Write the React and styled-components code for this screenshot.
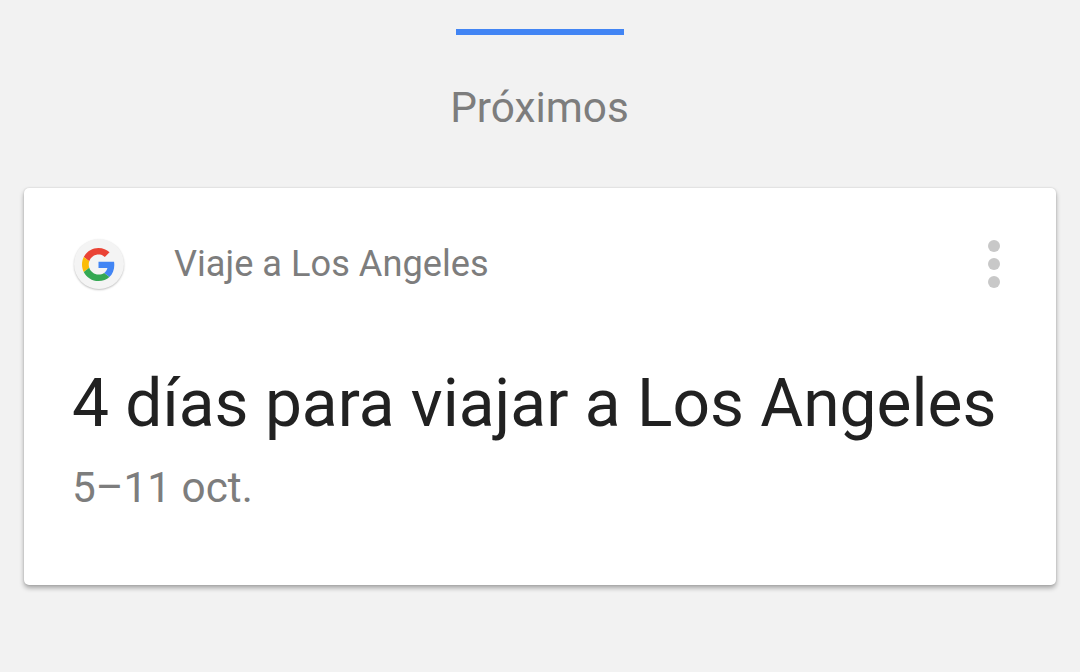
import React from 'react';
import styled, { createGlobalStyle } from 'styled-components';

const GlobalStyle = createGlobalStyle`
  html, body {
    margin: 0;
    padding: 0;
    background: #f2f2f2;
    font-family: Roboto, "Liberation Sans", sans-serif;
  }
`

const Page = styled.div`
  width: 1080px;
  height: 672px;
  overflow: hidden;
  box-sizing: border-box;
  padding: 29px 24px 0;
  display: flex;
  flex-direction: column;
  align-items: center;
`

const Bar = styled.div`
  width: 168px;
  height: 6px;
  background: #4285f4;
`

const Heading = styled.h2`
  margin: 46px 1px 0 0;
  height: 53px;
  font-size: 42.3px;
  line-height: 53px;
  font-weight: 400;
  color: #7d7d7d;
`

const Card = styled.section`
  width: 1032px;
  height: 397px;
  margin-top: 54px;
  box-sizing: border-box;
  padding: 50px 56px 0 48px;
  background: #fff;
  border-radius: 5px;
  box-shadow: 0 3px 5px rgba(0, 0, 0, 0.32), 0 0 2px rgba(0, 0, 0, 0.14);
`

const CardHeader = styled.div`
  display: flex;
  align-items: center;
  height: 52px;
`

const Logo = styled.div`
  width: 50px;
  height: 50px;
  margin-left: 2px;
  padding-right: 1px;
  box-sizing: border-box;
  border-radius: 50%;
  background: #f4f4f4;
  box-shadow: 0 1px 2px rgba(0, 0, 0, 0.25);
  display: flex;
  align-items: center;
  justify-content: center;
  flex-shrink: 0;
`

const Label = styled.span`
  margin-left: 50px;
  flex: 1;
  font-size: 36.2px;
  line-height: 50px;
  color: #7d7d7d;
`

const Dots = styled.div`
  display: flex;
  flex-direction: column;
  gap: 6px;
`

const Dot = styled.span`
  width: 12px;
  height: 12px;
  border-radius: 50%;
  background: #c8c8c8;
`

const Title = styled.h1`
  margin: 76px 0 0;
  font-size: 65.85px;
  line-height: 76px;
  font-weight: 400;
  color: #212121;
  white-space: nowrap;
`

const Dates = styled.p`
  margin: 20px 0 0;
  font-size: 42.3px;
  line-height: 52px;
  color: #7d7d7d;
`

const GoogleG = () => (
  <svg width="33" height="33" viewBox="0 0 48 48">
    <path fill="#ea4335" d="M24 9.5c3.54 0 6.71 1.22 9.21 3.6l6.85-6.85C35.9 2.38 30.47 0 24 0 14.62 0 6.51 5.38 2.56 13.22l7.98 6.19C12.43 13.72 17.74 9.5 24 9.5z" />
    <path fill="#4285f4" d="M46.98 24.55c0-1.57-.15-3.09-.38-4.55H24v9.02h12.94c-.58 2.96-2.26 5.48-4.78 7.18l7.73 6c4.51-4.18 7.09-10.36 7.09-17.65z" />
    <path fill="#fbbc05" d="M10.53 28.59c-.48-1.45-.76-2.99-.76-4.59s.27-3.14.76-4.59l-7.98-6.19C.92 16.46 0 20.12 0 24c0 3.88.92 7.54 2.56 10.78l7.97-6.19z" />
    <path fill="#34a853" d="M24 48c6.48 0 11.93-2.13 15.89-5.81l-7.73-6c-2.15 1.45-4.92 2.3-8.16 2.3-6.26 0-11.57-4.22-13.47-9.91l-7.98 6.19C6.51 42.62 14.62 48 24 48z" />
  </svg>
)

export default function App() {
  return (
    <Page>
      <GlobalStyle />
      <Bar />
      <Heading>Próximos</Heading>
      <Card>
        <CardHeader>
          <Logo><GoogleG /></Logo>
          <Label>Viaje a Los Angeles</Label>
          <Dots>
            <Dot />
            <Dot />
            <Dot />
          </Dots>
        </CardHeader>
        <Title>4 días para viajar a Los Angeles</Title>
        <Dates>5–11 oct.</Dates>
      </Card>
    </Page>
  );
}
